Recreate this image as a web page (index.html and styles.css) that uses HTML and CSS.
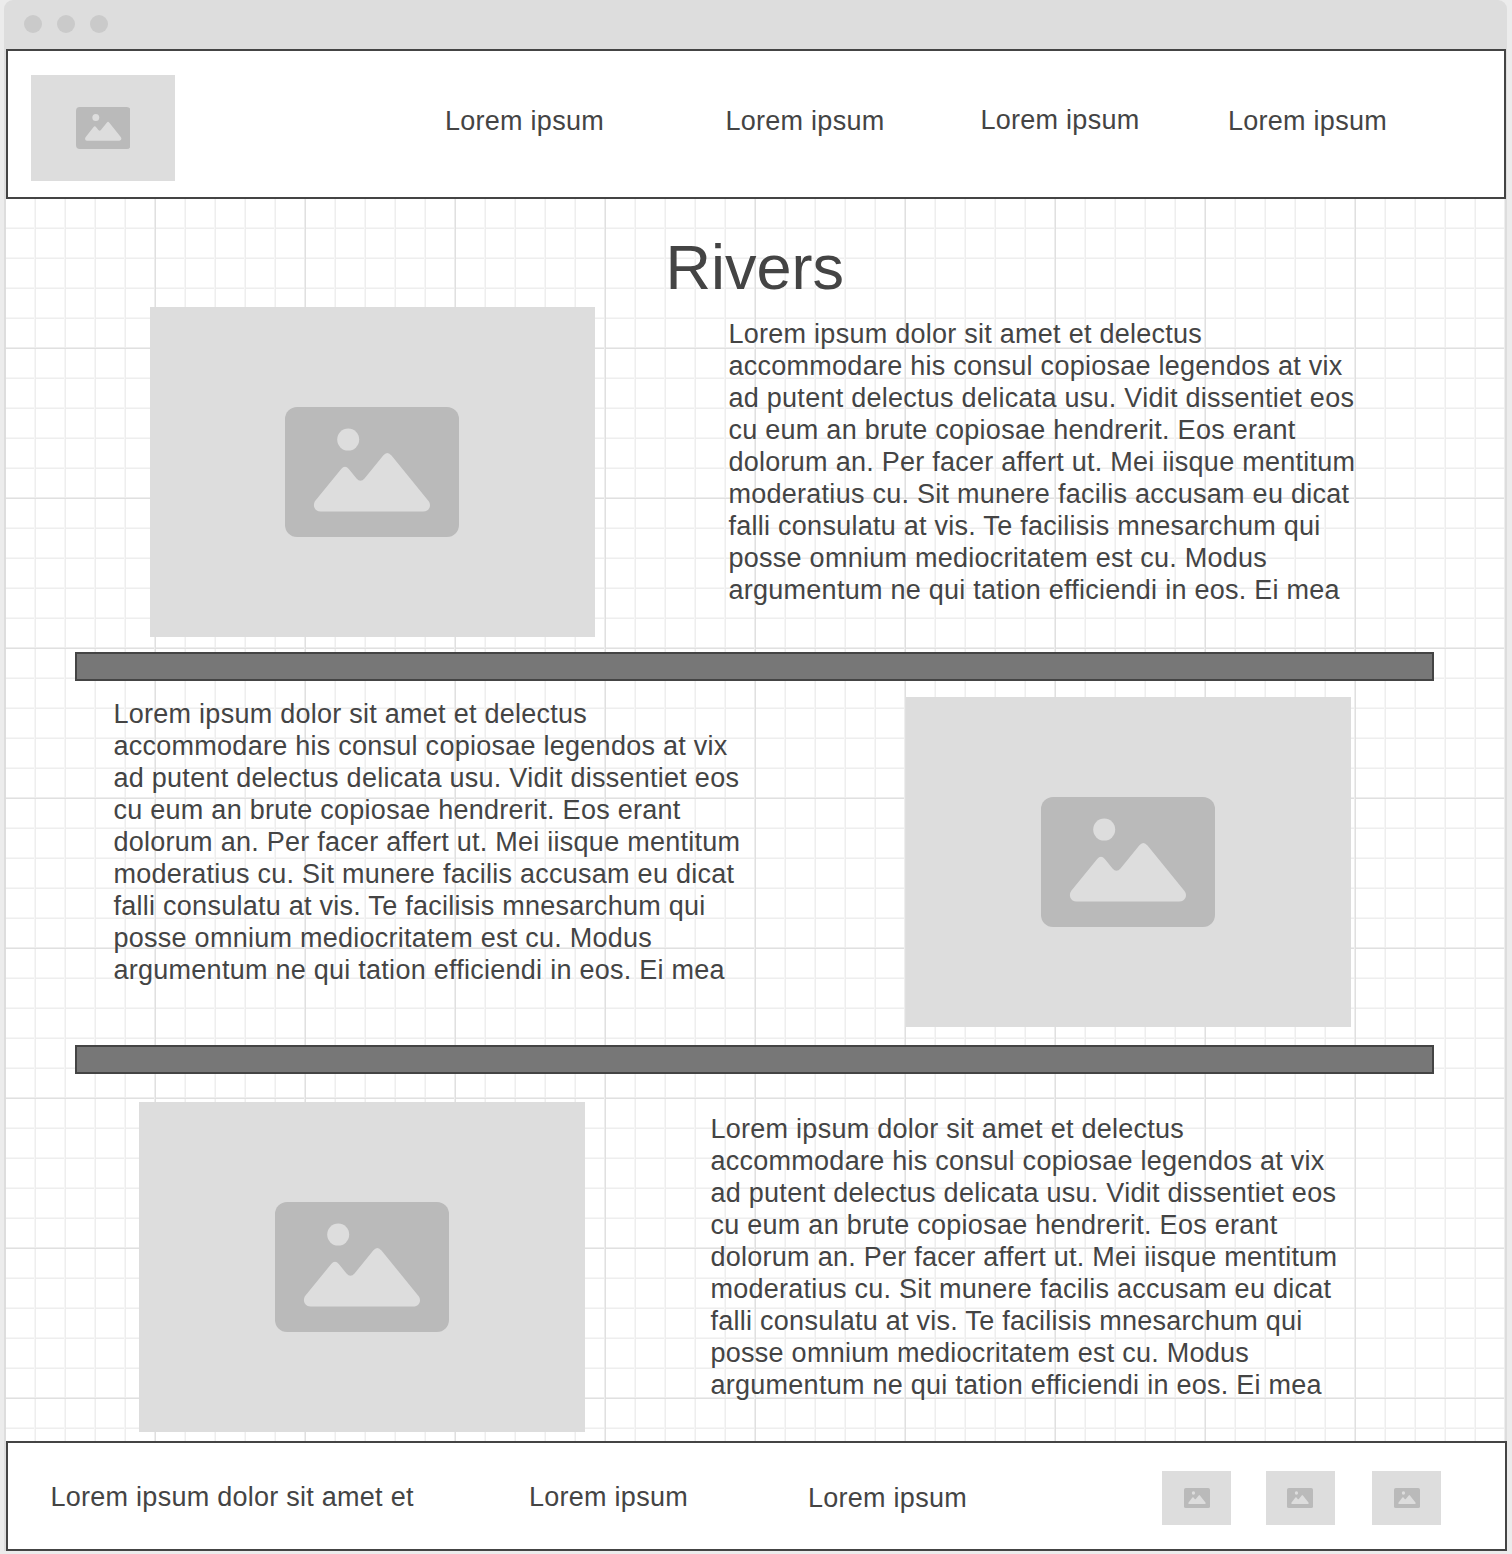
FILE: index.html
```html
<!DOCTYPE html>
<html lang="en">
<head>
<meta charset="utf-8">
<title>Rivers</title>
<link rel="stylesheet" href="styles.css">
</head>
<body>
<svg class="defs" aria-hidden="true">
  <symbol id="picture" viewBox="0 0 174 130" preserveAspectRatio="none">
    <rect width="174" height="130" rx="12" fill="#bababa"/>
    <circle cx="63.2" cy="32.6" r="11" fill="#ddd"/>
    <path fill="#ddd" d="M30.5 93.5 L56.2 62 Q60 57.4 63.8 62 L71.5 71.5 Q75.5 76.2 79.5 71.5 L98.2 48.5 Q102.3 43.3 106.5 48.5 L143.5 94 C147 98.500 144 104.500 138.500 104.500 H35.500 C29.500 104.500 27 98 30.500 93.500 Z"/>
  </symbol>
</svg>
<div class="window">
  <div class="titlebar"><span class="dot"></span><span class="dot"></span><span class="dot"></span></div>
  <header class="header">
    <div class="image logo"><svg><use href="#picture"/></svg></div>
    <nav class="nav">
      <a>Lorem ipsum</a>
      <a>Lorem ipsum</a>
      <a class="raised">Lorem ipsum</a>
      <a>Lorem ipsum</a>
    </nav>
  </header>
  <main class="main">
    <h1 class="title">Rivers</h1>
    <section class="row first">
      <div class="image photo"><svg><use href="#picture"/></svg></div>
      <p class="text">Lorem ipsum dolor sit amet et delectus<br>accommodare his consul copiosae legendos at vix<br>ad putent delectus delicata usu. Vidit dissentiet eos<br>cu eum an brute copiosae hendrerit. Eos erant<br>dolorum an. Per facer affert ut. Mei iisque mentitum<br>moderatius cu. Sit munere facilis accusam eu dicat<br>falli consulatu at vis. Te facilisis mnesarchum qui<br>posse omnium mediocritatem est cu. Modus<br>argumentum ne qui tation efficiendi in eos. Ei mea</p>
    </section>
    <div class="bar"></div>
    <section class="row second">
      <p class="text">Lorem ipsum dolor sit amet et delectus<br>accommodare his consul copiosae legendos at vix<br>ad putent delectus delicata usu. Vidit dissentiet eos<br>cu eum an brute copiosae hendrerit. Eos erant<br>dolorum an. Per facer affert ut. Mei iisque mentitum<br>moderatius cu. Sit munere facilis accusam eu dicat<br>falli consulatu at vis. Te facilisis mnesarchum qui<br>posse omnium mediocritatem est cu. Modus<br>argumentum ne qui tation efficiendi in eos. Ei mea</p>
      <div class="image photo"><svg><use href="#picture"/></svg></div>
    </section>
    <div class="bar"></div>
    <section class="row third">
      <div class="image photo"><svg><use href="#picture"/></svg></div>
      <p class="text">Lorem ipsum dolor sit amet et delectus<br>accommodare his consul copiosae legendos at vix<br>ad putent delectus delicata usu. Vidit dissentiet eos<br>cu eum an brute copiosae hendrerit. Eos erant<br>dolorum an. Per facer affert ut. Mei iisque mentitum<br>moderatius cu. Sit munere facilis accusam eu dicat<br>falli consulatu at vis. Te facilisis mnesarchum qui<br>posse omnium mediocritatem est cu. Modus<br>argumentum ne qui tation efficiendi in eos. Ei mea</p>
    </section>
  </main>
  <footer class="footer">
    <div class="links">
      <a>Lorem ipsum dolor sit amet et</a>
      <a>Lorem ipsum</a>
      <a class="lowered">Lorem ipsum</a>
    </div>
    <div class="badges">
      <div class="image badge"><svg><use href="#picture"/></svg></div>
      <div class="image badge"><svg><use href="#picture"/></svg></div>
      <div class="image badge"><svg><use href="#picture"/></svg></div>
    </div>
  </footer>
</div>
</body>
</html>
```
FILE: styles.css
```css
* { box-sizing: border-box; }

body {
  margin: 0;
  height: 1554px;
  overflow: hidden;
  background: #ececec;
  color: #444;
  font: 27px/32px "Liberation Sans", Arial, sans-serif;
  letter-spacing: 0.26px;
  font-variant-ligatures: none;
}

.defs { display: none; }

.window {
  width: 1503px;
  height: 1551px;
  margin-left: 4px;
  background: #ddd;
  border-radius: 9px 9px 0 0;
}

.titlebar {
  display: flex;
  gap: 15px;
  height: 49px;
  padding: 15px 20px;
}

.dot {
  width: 18px;
  height: 18px;
  border-radius: 50%;
  background: #cacaca;
}

.header {
  display: flex;
  width: 1500px;
  height: 150px;
  margin-left: 2px;
  padding: 24px 23px;
  background: #fff;
  border: 2px solid #444;
}

.image {
  display: flex;
  flex: none;
  align-items: center;
  justify-content: center;
  background: #ddd;
}

.logo { width: 144px; height: 106px; }
.logo svg { width: 54.5px; height: 42px; }

.nav {
  display: grid;
  grid-template-columns: 280.5px 255px 247.500px 165px;
  margin: 30px 0 0 270px;
  white-space: nowrap;
}

.raised { margin-top: -1px; }
.lowered { margin-top: 1px; }

.main {
  width: 1499px;
  height: 1242px;
  margin-left: 2px;
  padding-top: 32px;
  background:
    linear-gradient(90deg, #eee 1px, #e0e0e0 1px 2px, transparent 2px) 148px 0 / 150px 100%,
    linear-gradient(#eee 1px, #e0e0e0 1px 2px, transparent 2px) 0 148px / 100% 150px,
    linear-gradient(90deg, #f6f6f6 1px, #eee 1px 2px, transparent 2px) 28px 0 / 30px 100%,
    linear-gradient(#f6f6f6 1px, #eee 1px 2px, transparent 2px) 0 28px / 100% 30px,
    #fff;
}

.title {
  height: 76px;
  margin: 0 0 0 659.500px;
  font-size: 63px;
  font-weight: 400;
  line-height: 72px;
  letter-spacing: 0;
}

.row {
  display: flex;
  align-items: flex-start;
}

.text {
  margin: 0;
  white-space: nowrap;
}

.photo { width: 445px; height: 330px; }
.photo svg { width: 174px; height: 130px; }

.first { gap: 133.500px; height: 345px; padding-left: 144px; }
.first .photo { padding-right: 1px; }
.first .text { margin-top: 11px; }

.bar {
  width: 1359px;
  height: 29px;
  margin-left: 69px;
  background: #777;
  border: 2px solid #444;
}

.second { height: 364px; padding: 16px 0 0 107.500px; }
.second .text { width: 792px; margin-top: 1px; }

.third { gap: 125.500px; padding: 28px 0 0 133px; }
.third .photo { width: 446px; }
.third .text { margin-top: 11px; }

.footer {
  display: flex;
  width: 1501px;
  height: 110px;
  margin-left: 2px;
  padding: 28px 0 0 42.500px;
  background: #fff;
  border: 2px solid #444;
}

.links {
  display: grid;
  grid-template-columns: 478.500px 279px 354px;
  padding-top: 10px;
  white-space: nowrap;
}

.badges { display: flex; gap: 35px; }
.badge { width: 69px; height: 54px; }
.badge svg { width: 26px; height: 20px; }
.badge:nth-child(2) { padding-right: 2px; }
.badge:last-child { margin-left: 2px; }
```
